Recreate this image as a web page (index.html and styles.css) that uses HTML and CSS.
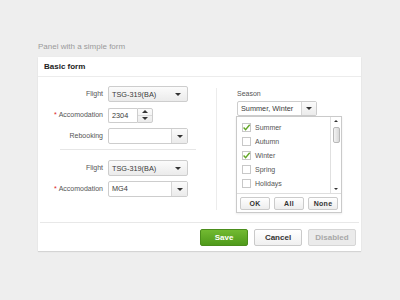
FILE: index.html
```html
<!DOCTYPE html>
<html>
<head>
<meta charset="utf-8">
<link rel="stylesheet" href="styles.css">
</head>
<body>
<div class="page">
  <div class="title">Panel with a simple form</div>
  <div class="panel">
    <div class="panel-header">Basic form</div>
    <div class="panel-body">
      <div class="col-left">
        <div class="row">
          <label class="lbl">Flight</label>
          <div class="select"><span class="val">TSG-319(BA)</span><i class="arrow"></i></div>
        </div>
        <div class="row">
          <label class="lbl"><span class="req">*</span>Accomodation</label>
          <div class="num"><span class="num-val">2304</span><span class="spin"><span class="spin-btn"><i class="up"></i></span><span class="spin-btn"><i class="arrow"></i></span></span></div>
        </div>
        <div class="row">
          <label class="lbl">Rebooking</label>
          <div class="combo"><span class="combo-val"></span><span class="trigger"><i class="arrow"></i></span></div>
        </div>
        <div class="hsep"></div>
        <div class="row">
          <label class="lbl">Flight</label>
          <div class="select"><span class="val">TSG-319(BA)</span><i class="arrow"></i></div>
        </div>
        <div class="row">
          <label class="lbl"><span class="req">*</span>Accomodation</label>
          <div class="combo"><span class="combo-val">MG4</span><span class="trigger"><i class="arrow"></i></span></div>
        </div>
      </div>
      <div class="vsep"></div>
      <div class="col-right">
        <div class="season-lbl">Season</div>
        <div class="combo season"><span class="combo-val">Summer, Winter</span><span class="trigger"><i class="arrow"></i></span></div>
        <div class="picker">
          <div class="picker-main">
            <ul class="opts">
              <li class="opt"><span class="cb"><svg viewBox="0 0 9 9" width="9" height="9"><path d="M1.6 4.6 L3.6 6.7 L7.7 1.8" fill="none" stroke="#62a626" stroke-width="1.4"/></svg></span>Summer</li>
              <li class="opt"><span class="cb"></span>Autumn</li>
              <li class="opt"><span class="cb"><svg viewBox="0 0 9 9" width="9" height="9"><path d="M1.6 4.6 L3.6 6.7 L7.7 1.8" fill="none" stroke="#62a626" stroke-width="1.4"/></svg></span>Winter</li>
              <li class="opt"><span class="cb"></span>Spring</li>
              <li class="opt"><span class="cb"></span>Holidays</li>
            </ul>
            <div class="scroll">
              <span class="sarrow"><i class="up small"></i></span>
              <span class="thumb"></span>
              <span class="sarrow bottom"><i class="arrow small"></i></span>
            </div>
          </div>
          <div class="picker-btns">
            <button class="pbtn">OK</button>
            <button class="pbtn">All</button>
            <button class="pbtn">None</button>
          </div>
        </div>
      </div>
    </div>
    <div class="panel-footer">
      <button class="btn save">Save</button>
      <button class="btn cancel">Cancel</button>
      <button class="btn disabled">Disabled</button>
    </div>
  </div>
</div>
</body>
</html>
```

FILE: styles.css
```css
* { box-sizing: border-box; }
html, body { margin: 0; padding: 0; }
body {
  background: #eeeeee;
  font-family: "Liberation Sans", Arial, sans-serif;
  width: 400px;
  height: 300px;
  overflow: hidden;
}
.page { padding: 42px 0 0 38px; }
.title {
  font-size: 8px;
  line-height: 10px;
  color: #9a9a9a;
  margin-bottom: 5px;
}
.panel {
  width: 323px;
  background: #fff;
  box-shadow: 0 1px 1px rgba(0,0,0,0.10), 0 0 1px rgba(0,0,0,0.06);
}
.panel-header {
  height: 20px;
  line-height: 19px;
  padding-left: 6px;
  font-size: 8px;
  font-weight: bold;
  color: #222;
  border-bottom: 1px solid #ececec;
}
.panel-body {
  display: flex;
  height: 145px;
}
.col-left {
  width: 178px;
  padding-top: 9px;
}
.row {
  display: flex;
  align-items: center;
  height: 16px;
  margin-bottom: 5px;
}
.lbl {
  width: 65px;
  margin-right: 5px;
  text-align: right;
  font-size: 7px;
  color: #555;
  line-height: 16px;
}
.req { color: #d22; margin-right: 2px; font-size: 7px; }
.select {
  width: 80px;
  height: 16px;
  border: 1px solid #cdcdcd;
  border-radius: 2px;
  background: linear-gradient(#fbfbfb, #ebebeb);
  display: flex;
  align-items: center;
  justify-content: space-between;
  padding: 0 6px 0 3px;
}
.val, .combo-val, .num-val {
  font-size: 7.3px;
  color: #3a3a3a;
}
.arrow {
  display: block;
  width: 0; height: 0;
  border-left: 3px solid transparent;
  border-right: 3px solid transparent;
  border-top: 3px solid #333;
}
.up {
  display: block;
  width: 0; height: 0;
  border-left: 3px solid transparent;
  border-right: 3px solid transparent;
  border-bottom: 3px solid #333;
}
.arrow.small, .up.small { border-left-width: 2px; border-right-width: 2px; }
.arrow.small { border-top-width: 2px; }
.up.small { border-bottom-width: 2px; }
.num {
  display: flex;
  height: 15px;
}
.num-val {
  width: 29px;
  height: 15px;
  border: 1px solid #cdcdcd;
  border-right: none;
  border-radius: 2px 0 0 2px;
  line-height: 13px;
  padding-left: 3px;
  background: #fff;
}
.spin {
  width: 16px;
  height: 15px;
  border: 1px solid #cdcdcd;
  border-radius: 0 2px 2px 0;
  background: linear-gradient(#fbfbfb, #ebebeb);
  display: flex;
  flex-direction: column;
}
.spin-btn {
  flex: 1;
  display: flex;
  align-items: center;
  justify-content: center;
}
.spin-btn + .spin-btn { border-top: 1px solid #dadada; }
.combo {
  width: 80px;
  height: 16px;
  display: flex;
  border: 1px solid #cdcdcd;
  border-radius: 2px;
  background: #fff;
}
.combo-val {
  flex: 1;
  line-height: 14px;
  padding-left: 3px;
}
.trigger {
  width: 16px;
  border-left: 1px solid #d6d6d6;
  background: linear-gradient(#fbfbfb, #ebebeb);
  display: flex;
  align-items: center;
  justify-content: center;
}
.hsep {
  height: 1px;
  background: #e6e6e6;
  margin: 5px 20px 10px 22px;
}
.vsep {
  width: 1px;
  background: #ececec;
  margin: 11px 0 12px;
}
.col-right {
  width: 144px;
  padding: 12px 0 0 20px;
}
.season-lbl {
  font-size: 7px;
  color: #555;
  line-height: 10px;
  margin-bottom: 2px;
}
.combo.season { height: 15px; }
.combo.season .combo-val { line-height: 13px; }
.combo.season .trigger { width: 15px; }
.picker {
  width: 106px;
  margin-left: -1px;
  border: 1px solid #cacaca;
  background: #fff;
  box-shadow: 0 1px 2px rgba(0,0,0,0.08);
}
.picker-main {
  display: flex;
  height: 76px;
}
.opts {
  list-style: none;
  margin: 0;
  padding: 3px 0 0 5px;
  flex: 1;
}
.opt {
  height: 14px;
  display: flex;
  align-items: center;
  font-size: 7px;
  color: #555;
}
.cb {
  width: 9px;
  height: 9px;
  border: 1px solid #c8c8c8;
  margin-right: 4px;
  background: #fff;
  display: block;
  position: relative;
}
.cb svg { position: absolute; left: -1px; top: -1px; }
.scroll {
  width: 11px;
  border-left: 1px solid #e0e0e0;
  display: flex;
  flex-direction: column;
  align-items: center;
}
.sarrow {
  height: 8px;
  display: flex;
  align-items: center;
  justify-content: center;
}
.sarrow.bottom { margin-top: auto; }
.thumb {
  width: 7px;
  height: 16px;
  margin-top: 2px;
  border: 1px solid #b8b8b8;
  border-radius: 2px;
  background: linear-gradient(to right, #f3f3f3, #d8d8d8);
}
.picker-btns {
  border-top: 1px solid #dedede;
  height: 19px;
  padding: 3px 3px 0;
  display: flex;
  gap: 4px;
}
.pbtn {
  width: 30px;
  height: 13px;
  padding: 0;
  border: 1px solid #cbcbcb;
  border-radius: 2px;
  background: linear-gradient(#ffffff, #ededed);
  font-family: "Liberation Sans", Arial, sans-serif;
  font-size: 7px;
  font-weight: bold;
  color: #333;
  letter-spacing: 0.3px;
}
.panel-footer {
  margin: 0 2px;
  border-top: 1px solid #e8e8e8;
  padding: 6px 3px 5px;
  display: flex;
  justify-content: flex-end;
  gap: 6px;
}
.btn {
  width: 48px;
  height: 17px;
  padding: 0;
  border-radius: 2px;
  font-family: "Liberation Sans", Arial, sans-serif;
  font-size: 8px;
  font-weight: bold;
}
.save {
  background: linear-gradient(#72ba31, #4f9a1b);
  border: 1px solid #4b8d1c;
  color: #fff;
}
.cancel {
  background: linear-gradient(#ffffff, #f0f0f0);
  border: 1px solid #cacaca;
  color: #333;
}
.disabled {
  background: #ebebeb;
  border: 1px solid #d6d6d6;
  color: #a8a8a8;
}
```
